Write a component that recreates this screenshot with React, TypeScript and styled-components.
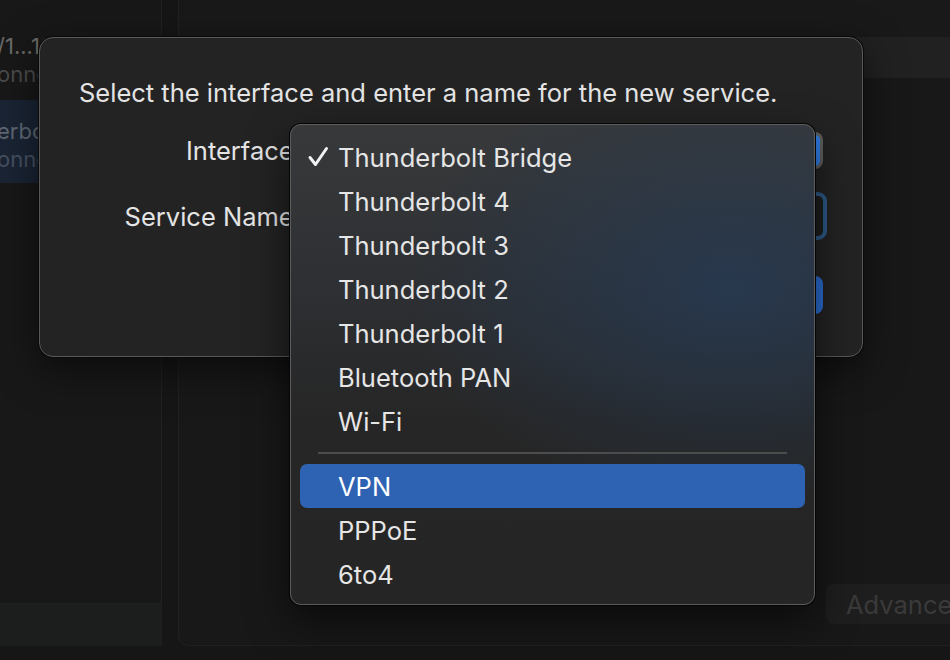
import React from "react";
import styled, { createGlobalStyle } from "styled-components";

const Global = createGlobalStyle`
  html, body { margin: 0; padding: 0; background: #161616; overflow: hidden; }
  body { font-family: Inter, "Noto Sans", "Liberation Sans", sans-serif; -webkit-font-smoothing: antialiased; }
`;

const Window = styled.div`
  position: relative;
  width: 1000px;
  height: 660px;
  display: flex;
  background: #161616;
  overflow: hidden;
  padding-bottom: 14px;
  box-sizing: border-box;
`;

const Sidebar = styled.div`
  width: 161px;
  flex: none;
  display: flex;
  flex-direction: column;
  background: #181818;
  border-right: 1px solid #202020;
`;

const SideList = styled.div`
  flex: 1;
  display: flex;
  flex-direction: column;
  gap: 2px;
  padding-top: 15px;
  overflow: hidden;
`;

const SideItem = styled.div<{ $selected?: boolean }>`
  height: 83px;
  box-sizing: border-box;
  padding-top: 18px;
  background: ${(p) => (p.$selected ? "#1a2434" : "transparent")};
  white-space: nowrap;
  overflow: hidden;
`;

const SideName = styled.div<{ $selected?: boolean }>`
  font-size: 22px;
  line-height: 27px;
  margin-left: -3px;
  color: ${(p) => (p.$selected ? "#5f6773" : "#6a6a6a")};
`;

const SideStatus = styled.div<{ $selected?: boolean }>`
  font-size: 22px;
  line-height: 27px;
  margin-top: 1px;
  margin-left: -3px;
  color: ${(p) => (p.$selected ? "#465060" : "#4a4a4a")};
`;

const SideFooter = styled.div`
  height: 42px;
  background: #1c1d1d;
  border-top: 1px solid #202020;
`;

const Panel = styled.div`
  flex: 1;
  margin-left: 16px;
  display: flex;
  flex-direction: column;
  background: #181818;
  border: 1px solid #202020;
  border-top: none;
  border-radius: 0 0 0 10px;
`;

const PanelTop = styled.div`
  height: 37px;
  background: #191919;
`;

const PanelHeader = styled.div`
  height: 41px;
  background: #212121;
`;

const PanelBody = styled.div`
  flex: 1;
`;

const PanelFooter = styled.div`
  display: flex;
  padding: 0 0 21px 647px;
`;

const GhostButton = styled.div`
  height: 40px;
  padding: 0 20px;
  display: flex;
  align-items: center;
  border-radius: 8px;
  background: #1e1e1e;
  color: #3a3a3a;
  font-size: 25.5px;
  white-space: nowrap;
`;

const Sheet = styled.div`
  position: absolute;
  left: 39px;
  top: 37px;
  width: 824px;
  height: 320px;
  box-sizing: border-box;
  background: #232323;
  border: 1px solid #595959;
  border-radius: 14px;
  box-shadow: 0 0 0 1px #0a0a0a, 0 12px 40px rgba(0, 0, 0, 0.55);
  padding: 40px 39px 0 39px;
  display: flex;
  flex-direction: column;
`;

const Prompt = styled.div`
  font-size: 25.5px;
  line-height: 30px;
  color: #e4e4e4;
  white-space: nowrap;
`;

const FormRow = styled.div<{ $mt: number }>`
  display: flex;
  align-items: center;
  margin-top: ${(p) => p.$mt}px;
`;

const Label = styled.div`
  width: 222px;
  flex: none;
  text-align: right;
  font-size: 25.5px;
  color: #e4e4e4;
  white-space: nowrap;
`;

const PopupButton = styled.div`
  flex: 1;
  height: 37px;
  box-sizing: border-box;
  border-radius: 8px;
  background: #5e5e5e;
  padding: 3px;
  display: flex;
  justify-content: flex-end;
`;

const Chevron = styled.div`
  width: 24px;
  border-radius: 5px;
  background: #2f7de6;
`;

const TextField = styled.div`
  flex: 1;
  height: 40px;
  box-sizing: border-box;
  border-radius: 5px;
  background: #1e1e1e;
  outline: 4px solid #2c5a88;
`;

const ButtonRow = styled.div`
  display: flex;
  justify-content: flex-end;
  gap: 16px;
  margin-top: 40px;
`;

const PushButton = styled.div<{ $primary?: boolean }>`
  height: 38px;
  padding: 0 22px;
  display: flex;
  align-items: center;
  border-radius: 8px;
  font-size: 25.5px;
  color: #fff;
  background: ${(p) => (p.$primary ? "#2b6dd4" : "#5a5a5a")};
`;

const Menu = styled.div`
  position: absolute;
  left: 290px;
  top: 124px;
  width: 525px;
  height: 481px;
  box-sizing: border-box;
  border-radius: 11px;
  border: 1px solid #5c5c5c;
  box-shadow: 0 0 0 1px #050505, 0 16px 40px rgba(0, 0, 0, 0.6);
  background:
    radial-gradient(ellipse 62% 45% at 84% 34%, rgba(38, 58, 84, 0.8), rgba(38, 58, 84, 0) 100%),
    linear-gradient(180deg, #37393b 0%, #2d2f32 35%, #262626 62%, #252525 100%);
  padding: 10px 9px 8px 9px;
  display: flex;
  flex-direction: column;
`;

const MenuItem = styled.div<{ $active?: boolean }>`
  position: relative;
  height: 44px;
  flex: none;
  display: flex;
  align-items: center;
  padding-left: 38px;
  border-radius: 7px;
  font-size: 25.5px;
  color: ${(p) => (p.$active ? "#ffffff" : "#e6e6e6")};
  background: ${(p) => (p.$active ? "#2d63b2" : "transparent")};
  white-space: nowrap;
`;

const Check = styled.svg`
  position: absolute;
  left: 7px;
  top: 11px;
  width: 22px;
  height: 22px;
`;

const Separator = styled.div`
  height: 2px;
  margin: 9px 18px 10px 18px;
  background: #4d4d4d;
`;

const items = [
  "Thunderbolt Bridge",
  "Thunderbolt 4",
  "Thunderbolt 3",
  "Thunderbolt 2",
  "Thunderbolt 1",
  "Bluetooth PAN",
  "Wi-Fi",
];

export default function App() {
  return (
    <>
      <Global />
      <Window>
        <Sidebar>
          <SideList>
            <SideItem>
              <SideName>/1...1000 LAN</SideName>
              <SideStatus>onnected</SideStatus>
            </SideItem>
            <SideItem $selected>
              <SideName $selected>erbolt Bridge</SideName>
              <SideStatus $selected>onnected</SideStatus>
            </SideItem>
          </SideList>
          <SideFooter />
        </Sidebar>
        <Panel>
          <PanelTop />
          <PanelHeader />
          <PanelBody />
          <PanelFooter>
            <GhostButton>Advanced…</GhostButton>
          </PanelFooter>
        </Panel>

        <Sheet>
          <Prompt>Select the interface and enter a name for the new service.</Prompt>
          <FormRow $mt={24}>
            <Label>Interface:</Label>
            <PopupButton>
              <Chevron />
            </PopupButton>
          </FormRow>
          <FormRow $mt={27}>
            <Label>Service Name:</Label>
            <TextField />
          </FormRow>
          <ButtonRow>
            <PushButton>Cancel</PushButton>
            <PushButton $primary>Create</PushButton>
          </ButtonRow>
        </Sheet>

        <Menu>
          {items.map((t, i) => (
            <MenuItem key={t}>
              {i === 0 && (
                <Check viewBox="0 0 22 22">
                  <path
                    d="M3 11.5 L8.5 18.5 L19.5 2.5"
                    fill="none"
                    stroke="#f2f2f2"
                    strokeWidth="3"
                    strokeLinecap="round"
                    strokeLinejoin="round"
                  />
                </Check>
              )}
              {t}
            </MenuItem>
          ))}
          <Separator />
          <MenuItem $active>VPN</MenuItem>
          <MenuItem>PPPoE</MenuItem>
          <MenuItem>6to4</MenuItem>
        </Menu>
      </Window>
    </>
  );
}
